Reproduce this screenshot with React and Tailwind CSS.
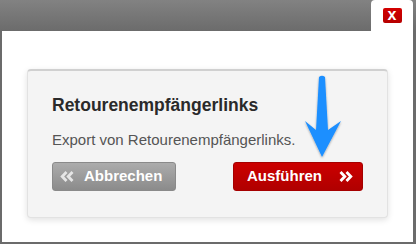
export default function App() {
  return (
    <div className="relative w-[416px] h-[244px] overflow-hidden bg-[#5a5a5a]" style={{ fontFamily: '"Liberation Sans", Arial, sans-serif' }}>
      <div className="absolute left-0 top-0 w-[416px] h-[244px] bg-gradient-to-b from-[#828282] from-0% to-[#6b6b6b] to-[13%]" />
      <div className="absolute left-[2px] top-0 w-[411px] h-[242px] flex flex-col">
        <div className="flex justify-end h-[31px]">
          <div className="w-[42px] h-[31px] bg-white rounded-t-[4px] flex justify-center pt-[8px]">
            <div className="w-[19px] h-[15px] rounded-[2px] bg-gradient-to-b from-[#d30000] to-[#b60000] flex items-center justify-center text-white font-bold text-[16px] leading-none pb-[2px]">x</div>
          </div>
        </div>
        <div className="flex-1 bg-white pt-[38px] pl-[25px]">
          <div className="w-[361px] h-[149px] bg-[#f4f4f4] rounded-[4px] border border-[#e2e2e2] border-t-[2px] border-t-[#d0d0d0] shadow-[0_2px_6px_rgba(0,0,0,0.12)] pl-[24px] pt-[24px]">
            <div className="text-[17.5px] font-bold text-[#2a2a2a] leading-[20px]">Retourenempfängerlinks</div>
            <div className="mt-[16px] text-[15px] text-[#555] leading-[18px]">Export von Retourenempfängerlinks.</div>
            <div className="mt-[13px] flex">
              <div className="w-[124px] h-[29px] rounded-[3px] bg-gradient-to-b from-[#acacac] to-[#8b8b8b] border border-[#8a8a8a] flex items-center text-white font-bold text-[15px]">
                <svg width="14" height="11" viewBox="0 0 14 11" className="ml-[7px] mr-[10px]">
                  <path d="M6.5 1 L2.2 5.5 L6.5 10 M12.5 1 L8.2 5.5 L12.5 10" fill="none" stroke="#e6e6e6" strokeWidth="2.8" />
                </svg>
                <span>Abbrechen</span>
              </div>
              <div className="ml-[57px] w-[130px] h-[29px] rounded-[3px] bg-gradient-to-b from-[#cc0000] to-[#b00000] border border-[#a50000] flex items-center text-white font-bold text-[15px]">
                <span className="ml-[13px]">Ausführen</span>
                <svg width="14" height="11" viewBox="0 0 14 11" className="ml-[17px]">
                  <path d="M1.5 1 L5.8 5.5 L1.5 10 M7.5 1 L11.8 5.5 L7.5 10" fill="none" stroke="#ffffff" strokeWidth="2.8" />
                </svg>
              </div>
            </div>
          </div>
        </div>
      </div>
      <svg className="absolute left-[300px] top-[70px]" width="50" height="95" viewBox="300 70 50 95">
        <defs>
          <filter id="sh" x="-30%" y="-30%" width="160%" height="160%">
            <feDropShadow dx="0" dy="1" stdDeviation="1.2" floodColor="#000" floodOpacity="0.35" />
          </filter>
        </defs>
        <path d="M319 77 Q322 74.5 325 77 L328 130 L341 121 L322 157 L305 121 L316 130 Z" fill="#1e8fff" filter="url(#sh)" />
      </svg>
    </div>
  );
}
